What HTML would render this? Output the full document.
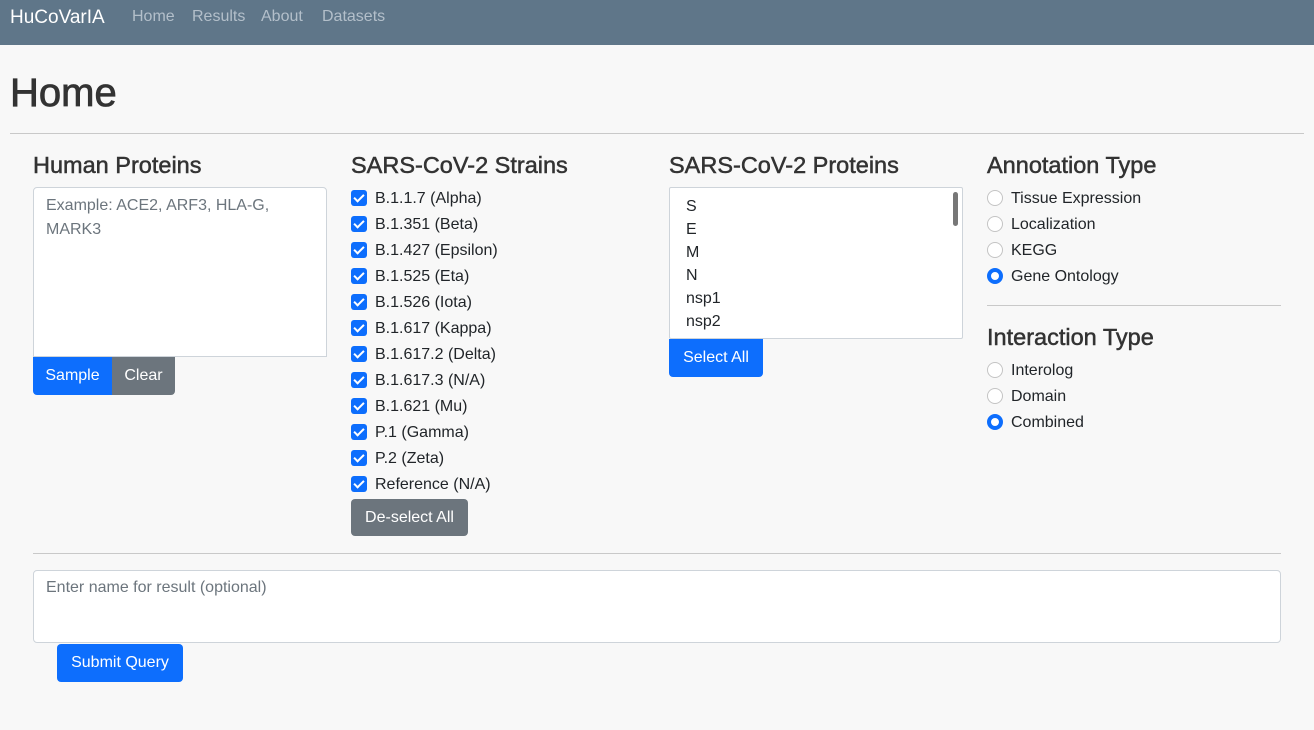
<!DOCTYPE html>
<html><head><meta charset="utf-8"><style>
*{box-sizing:border-box}
body{margin:0;width:1314px;height:730px;background:#f8f8f8;font-family:"Liberation Sans",sans-serif;color:#212529;position:relative;overflow:hidden;font-size:16px}
.a{position:absolute;white-space:nowrap}
nav{position:absolute;left:0;top:0;width:1314px;height:45px;background:#5f7689}
.lnk{color:#b3bfca;font-size:16px;top:8px}
h2{margin:0;font-weight:500;font-size:23.5px;color:#333;position:absolute;-webkit-text-stroke:0.5px #333}
.hr{position:absolute;height:1px;background:#c9c9c9}
.btn{position:absolute;color:#fff;font-size:16px;display:flex;align-items:center;justify-content:center;border-radius:4px}
.blue{background:#0d6efd}.gray{background:#6c757d}
.cb{position:absolute;width:16px;height:16px;border-radius:3px;background:#0d6efd}
.cb:after{content:"";position:absolute;left:5px;top:2px;width:4px;height:8px;border:solid #fff;border-width:0 2px 2px 0;transform:rotate(45deg)}
.lbl{position:absolute;font-size:16px;line-height:20px;margin-top:1px}
.rd{position:absolute;width:16px;height:16px;border-radius:50%;border:1px solid #c4c4c4;background:#fff}
.rd.on{border:4.5px solid #0d6efd;background:#fff}
.ta{position:absolute;border:1px solid #ced4da;border-radius:4px;background:#fff}
</style></head><body>
<nav>
<div class="a" style="left:10px;top:7px;color:#fff;font-size:19px">HuCoVarIA</div>
<div class="a lnk" style="left:132px">Home</div>
<div class="a lnk" style="left:192px">Results</div>
<div class="a lnk" style="left:261px">About</div>
<div class="a lnk" style="left:322px">Datasets</div>
</nav>
<div class="a" style="left:10px;top:71px;font-size:40px;font-weight:500;color:#333;-webkit-text-stroke:0.8px #333">Home</div>
<div class="hr" style="left:10px;top:133px;width:1294px"></div>

<h2 style="left:33px;top:152px">Human Proteins</h2>
<div class="ta" style="left:33px;top:187px;width:294px;height:170px;border-radius:4px 4px 0 0"><div style="position:absolute;left:12px;top:6px;color:#6c757d;line-height:24px;font-size:16px">Example: ACE2, ARF3, HLA-G,<br>MARK3</div></div>
<div class="btn blue" style="left:33px;top:357px;width:79px;height:38px;border-radius:0 0 0 4px">Sample</div>
<div class="btn gray" style="left:112px;top:357px;width:63px;height:38px;border-radius:0 0 4px 0">Clear</div>

<h2 style="left:351px;top:152px">SARS-CoV-2 Strains</h2>
<div class="cb" style="left:351px;top:190px"></div><div class="lbl" style="left:375px;top:188px">B.1.1.7 (Alpha)</div>
<div class="cb" style="left:351px;top:216px"></div><div class="lbl" style="left:375px;top:214px">B.1.351 (Beta)</div>
<div class="cb" style="left:351px;top:242px"></div><div class="lbl" style="left:375px;top:240px">B.1.427 (Epsilon)</div>
<div class="cb" style="left:351px;top:268px"></div><div class="lbl" style="left:375px;top:266px">B.1.525 (Eta)</div>
<div class="cb" style="left:351px;top:294px"></div><div class="lbl" style="left:375px;top:292px">B.1.526 (Iota)</div>
<div class="cb" style="left:351px;top:320px"></div><div class="lbl" style="left:375px;top:318px">B.1.617 (Kappa)</div>
<div class="cb" style="left:351px;top:346px"></div><div class="lbl" style="left:375px;top:344px">B.1.617.2 (Delta)</div>
<div class="cb" style="left:351px;top:372px"></div><div class="lbl" style="left:375px;top:370px">B.1.617.3 (N/A)</div>
<div class="cb" style="left:351px;top:398px"></div><div class="lbl" style="left:375px;top:396px">B.1.621 (Mu)</div>
<div class="cb" style="left:351px;top:424px"></div><div class="lbl" style="left:375px;top:422px">P.1 (Gamma)</div>
<div class="cb" style="left:351px;top:450px"></div><div class="lbl" style="left:375px;top:448px">P.2 (Zeta)</div>
<div class="cb" style="left:351px;top:476px"></div><div class="lbl" style="left:375px;top:474px">Reference (N/A)</div>
<div class="btn gray" style="left:351px;top:499px;width:117px;height:37px">De-select All</div>

<h2 style="left:669px;top:152px">SARS-CoV-2 Proteins</h2>
<div class="ta" style="left:669px;top:187px;width:294px;height:152px;border-radius:2px;overflow:hidden">
<div style="position:absolute;left:16px;top:7px;line-height:23px;font-size:16px">S<br>E<br>M<br>N<br>nsp1<br>nsp2<br>nsp3</div>
<div style="position:absolute;right:4px;top:4px;width:5px;height:34px;border-radius:3px;background:#777"></div></div>
<div class="btn blue" style="left:669px;top:339px;width:94px;height:38px;border-radius:0 0 4px 4px">Select All</div>

<h2 style="left:987px;top:152px">Annotation Type</h2>
<div class="rd" style="left:987px;top:190px"></div><div class="lbl" style="left:1011px;top:188px">Tissue Expression</div>
<div class="rd" style="left:987px;top:216px"></div><div class="lbl" style="left:1011px;top:214px">Localization</div>
<div class="rd" style="left:987px;top:242px"></div><div class="lbl" style="left:1011px;top:240px">KEGG</div>
<div class="rd on" style="left:987px;top:268px"></div><div class="lbl" style="left:1011px;top:266px">Gene Ontology</div>
<div class="hr" style="left:987px;top:305px;width:294px"></div>
<h2 style="left:987px;top:324px">Interaction Type</h2>
<div class="rd" style="left:987px;top:362px"></div><div class="lbl" style="left:1011px;top:360px">Interolog</div>
<div class="rd" style="left:987px;top:388px"></div><div class="lbl" style="left:1011px;top:386px">Domain</div>
<div class="rd on" style="left:987px;top:414px"></div><div class="lbl" style="left:1011px;top:412px">Combined</div>

<div class="hr" style="left:33px;top:553px;width:1248px"></div>
<div class="ta" style="left:33px;top:570px;width:1248px;height:73px"><div style="position:absolute;left:12px;top:8px;color:#6c757d">Enter name for result (optional)</div></div>
<div class="btn blue" style="left:57px;top:644px;width:126px;height:38px">Submit Query</div>
</body></html>
